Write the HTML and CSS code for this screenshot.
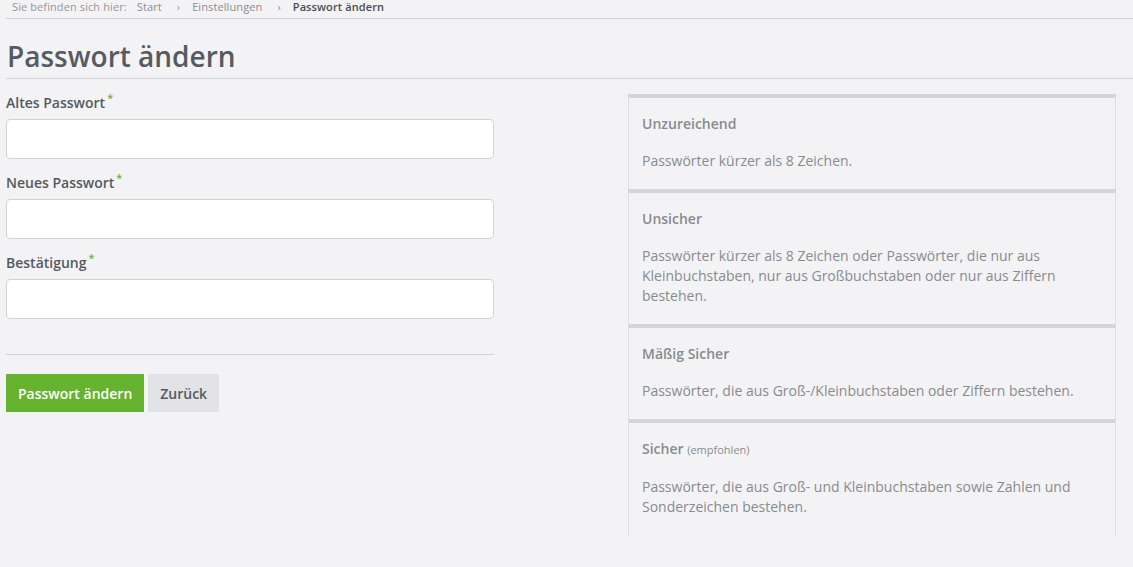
FILE: index.html
```html
<!DOCTYPE html>
<html lang="de">
<head>
    <meta charset="UTF-8">
    <meta name="viewport" content="width=device-width, initial-scale=1.0">
    <title>Passwort ändern</title>
    <link rel="stylesheet" href="styles.css">
</head>
<body>
    <!-- Breadcrumb -->
    <div class="breadcrumb">
        <span class="crumb-intro">Sie befinden sich hier:</span>
        <a href="#">Start</a>
        <span class="sep">›</span>
        <a href="#">Einstellungen</a>
        <span class="sep">›</span>
        <span class="current">Passwort ändern</span>
    </div>

    <h1 class="page-title">Passwort ändern</h1>

    <div class="layout">
        <!-- Form -->
        <form class="pw-form" onsubmit="return false;">
            <div class="field">
                <label for="oldPw">Altes Passwort<span class="req">*</span></label>
                <input type="password" id="oldPw" />
            </div>
            <div class="field">
                <label for="newPw">Neues Passwort<span class="req">*</span></label>
                <input type="password" id="newPw" />
            </div>
            <div class="field">
                <label for="confirmPw">Bestätigung<span class="req">*</span></label>
                <input type="password" id="confirmPw" />
            </div>
            <hr class="divider">
            <div class="actions">
                <button type="submit" class="btn btn-primary">Passwort ändern</button>
                <button type="button" class="btn btn-secondary">Zurück</button>
            </div>
        </form>

        <!-- Strength levels -->
        <div class="levels">
            <div class="level">
                <div class="level-title">Unzureichend</div>
                <p>Passwörter kürzer als 8 Zeichen.</p>
            </div>
            <div class="level">
                <div class="level-title">Unsicher</div>
                <p>Passwörter kürzer als 8 Zeichen oder Passwörter, die nur aus Kleinbuchstaben, nur aus Großbuchstaben oder nur aus Ziffern bestehen.</p>
            </div>
            <div class="level">
                <div class="level-title">Mäßig Sicher</div>
                <p>Passwörter, die aus Groß-/Kleinbuchstaben oder Ziffern bestehen.</p>
            </div>
            <div class="level">
                <div class="level-title">Sicher <small>(empfohlen)</small></div>
                <p>Passwörter, die aus Groß- und Kleinbuchstaben sowie Zahlen und Sonderzeichen bestehen.</p>
            </div>
        </div>
    </div>
</body>
</html>
```

FILE: styles.css
```css
body {
    font-family: "Open Sans", "Liberation Sans", sans-serif;
    margin: 0;
    padding: 0 0 0 6px;
    background-color: #f3f3f5;
    color: #555a60;
}
.breadcrumb {
    display: flex;
    font-size: 11px;
    line-height: 14px;
    letter-spacing: 0.1px;
    padding: 0 0 4px 6px;
    border-bottom: 1px solid #d3d5d9;
    color: #94979b;
}
.breadcrumb a {
    color: #8a8d91;
    text-decoration: none;
}
.crumb-intro {
    margin-right: 10px;
}
.breadcrumb .sep {
    margin: 0 12px 0 15px;
}
.breadcrumb .current {
    color: #4a4d52;
    font-weight: 600;
}
.page-title {
    font-size: 28px;
    font-weight: 600;
    line-height: 36px;
    margin: 0;
    padding: 19px 0 4px 1px;
    border-bottom: 1px solid #d3d5d9;
    color: #575b61;
}
.layout {
    display: grid;
    grid-template-columns: 488px 488px;
    column-gap: 134px;
    padding-top: 14px;
}
.field {
    display: flex;
    flex-direction: column;
    gap: 6px;
    margin-bottom: 14px;
}
.field label {
    font-size: 14px;
    font-weight: 600;
    line-height: 20px;
    color: #555a60;
}
.req {
    color: #6ab42e;
    font-size: 11px;
    vertical-align: top;
    position: relative;
    top: -5px;
    margin-left: 2px;
}
.field input {
    height: 40px;
    box-sizing: border-box;
    border: 1px solid #d0d2d6;
    border-radius: 4px;
    background: #ffffff;
    padding: 6px 10px;
    font-size: 14px;
}
.divider {
    border: none;
    border-top: 1px solid #d3d5d9;
    margin: 35px 0 19px;
}
.actions {
    display: flex;
    gap: 4px;
}
.btn {
    font-family: inherit;
    font-size: 14px;
    font-weight: 600;
    height: 38px;
    padding: 0 12px;
    border: none;
    cursor: pointer;
}
.btn-primary {
    background-color: #65b32e;
    color: #ffffff;
}
.btn-secondary {
    background-color: #e1e3e7;
    color: #555a60;
}
.levels {
    margin-top: 1px;
    height: 441px;
    overflow: hidden;
}
.level {
    border-top: 4px solid #d3d5da;
    border-left: 1px solid #dcdee2;
    border-right: 1px solid #dcdee2;
    padding: 16px 13px 18px;
    font-size: 14px;
    line-height: 20px;
    color: #888b90;
}
.level-title {
    font-weight: 600;
    margin-bottom: 17px;
}
.level-title small {
    font-size: 11px;
    font-weight: 400;
}
.level p {
    margin: 0;
}
```
